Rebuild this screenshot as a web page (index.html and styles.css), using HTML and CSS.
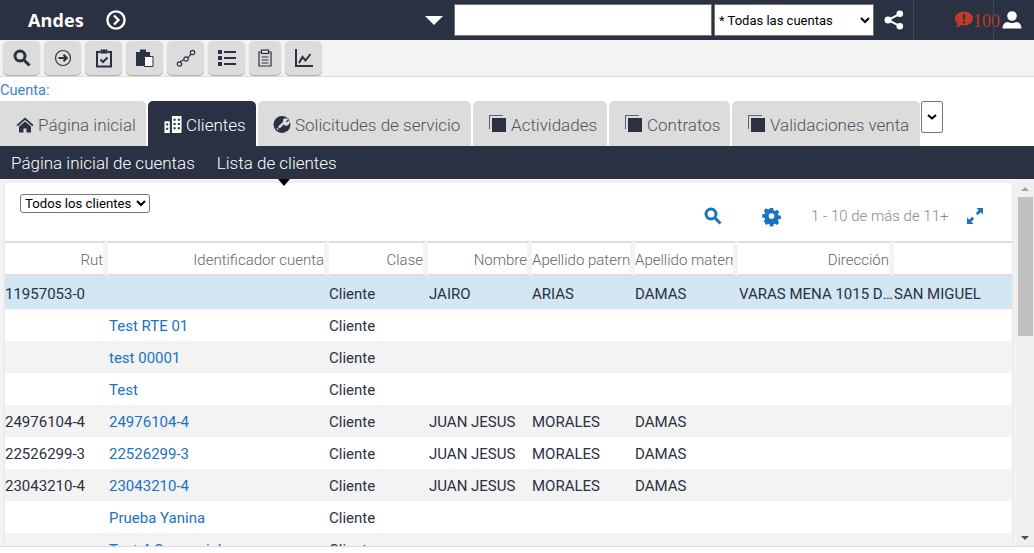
FILE: index.html
```html
<!DOCTYPE html>
<html>
<head>
    <meta charset="utf-8" />
    <title>Andes - Lista de clientes</title>
    <link rel="stylesheet" href="styles.css">
</head>
<body>
<header class="topbar">
    <span class="logo">Ande<span class="logo-dot">s</span></span>
    <svg class="go" viewBox="0 0 20 20"><circle cx="10" cy="10" r="8.600"/><path d="M8 5.500l4.500 4.500L8 14.500"/></svg>
    <span class="caret"></span>
    <input class="search" type="text">
    <select class="accounts"><option>* Todas las cuentas</option></select>
    <svg class="share" viewBox="0 0 20 20"><path d="M15.800 3.800L4 10l11.800 6.200"/><circle cx="15.800" cy="3.800" r="3.300"/><circle cx="4" cy="10" r="3.500"/><circle cx="15.800" cy="16.200" r="3.300"/></svg>
    <div class="alerts">
        <svg class="bubble" viewBox="0 0 18 18"><path d="M9 0.500c5 0 9 3 9 7s-4 7-9 7c-1 0-2-.1-2.900-.4C4.800 15.400 3 16.500.8 16.500c1.100-1.100 1.800-2.300 2-3.700C1.100 11.500 0 9.600 0 7.500c0-4 4-7 9-7z"/><path class="mark" d="M8 3h2.200l-.3 6H8.300zM8 10.200h2.200v2H8z"/></svg>
        <span class="count">100</span>
        <svg class="user" viewBox="0 0 20 18"><circle cx="10" cy="5" r="4.800"/><path d="M0.500 17.500c0-4.500 3-6.500 5.500-6.500 1 .6 2.500 1 4 1s3-.4 4-1c2.500 0 5.500 2 5.500 6.500z"/></svg>
    </div>
</header>

<nav class="tools">
    <button class="tool"><svg viewBox="0 0 18 18"><circle cx="7" cy="7" r="5" class="thick"/><path d="M11 11l5.500 5.500" class="thick"/></svg></button>
    <button class="tool"><svg viewBox="0 0 18 18"><circle cx="9" cy="9" r="7.500"/><path d="M4.500 9h8M9.500 5.800L12.800 9l-3.300 3.200" class="mid"/></svg></button>
    <button class="tool"><svg viewBox="0 0 18 18"><path d="M5.500 3H2v14.500h14V3h-3.500" class="mid"/><rect x="5.500" y="0.500" width="7" height="4" class="fill"/><path d="M5.500 10.500l2.500 2.500 4.500-4.500" class="mid"/></svg></button>
    <button class="tool"><svg viewBox="0 0 18 18"><path class="fill" d="M0 3h4V0.500h6V3h4v4H8v10H0z"/><path d="M8.500 7.500h8.500v10H8.500z" class="paper"/></svg></button>
    <button class="tool"><svg viewBox="0 0 18 18"><circle cx="2.500" cy="15" r="2.200"/><circle cx="9" cy="10" r="2.200"/><circle cx="15.500" cy="3.500" r="2.200"/><path d="M2.800 12.800L7 10.800M11 9l3-3.800"/></svg></button>
    <button class="tool"><svg viewBox="0 0 18 18"><path class="fill" d="M0 1h4v4H0zM0 7h4v4H0zM0 13h4v4H0z"/><path d="M6 3h12M6 9h12M6 15h12" class="mid"/></svg></button>
    <button class="tool tool-narrow"><svg viewBox="0 0 18 18"><path d="M5 3H3v14h12V3h-2"/><rect x="5.500" y="1" width="7" height="3.500"/><path d="M5.500 8h7M5.500 11h7M5.500 14h7"/></svg></button>
    <button class="tool"><svg viewBox="0 0 18 18"><path d="M1 0v17h17" class="mid"/><path d="M4 14l3.500-6 3 3.500L15.500 5" class="mid"/></svg></button>
</nav>

<div class="crumb">Cuenta:</div>

<div class="tabs">
    <a class="tab">
        <svg class="tab-icon" viewBox="0 0 18 16"><path d="M9 1L0.500 8.500l1.200 1.200L9 3.400l7.300 6.300 1.200-1.200z"/><path d="M3 10l6-5 6 5v6h-4.500v-4h-3v4H3z"/></svg>
        Página inicial</a>
    <a class="tab tab-on">
        <svg class="tab-icon" viewBox="0 0 16 16"><path d="M0 5h5v11H0zM7 0h9v16H7z"/><path class="holes" d="M1.500 7h2v2h-2zM1.500 11h2v2h-2zM8.500 2.500h2v2h-2zM12.500 2.500h2v2h-2zM8.500 6.500h2v2h-2zM12.500 6.500h2v2h-2zM8.500 10.500h2v2h-2zM12.500 10.500h2v2h-2z"/></svg>
        Clientes</a>
    <a class="tab">
        <svg class="tab-icon" viewBox="0 0 16 16"><circle cx="8" cy="8" r="8"/><path class="wrench" d="M11 5L5 11"/><path class="wrench-end" d="M9.500 3.500a3 3 0 0 1 3.600-.4l-1.600 1.600.3 1.300 1.300.3 1.600-1.600a3 3 0 0 1-4.200 3.600zM3 11.500l1.500 1.500"/></svg>
        Solicitudes de servicio</a>
    <a class="tab"><span class="stack"></span>Actividades</a>
    <a class="tab"><span class="stack"></span>Contratos</a>
    <a class="tab"><span class="stack"></span>Validaciones venta</a>
    <button class="more"><svg viewBox="0 0 10 6"><path d="M1 1l4 3.500L9 1"/></svg></button>
</div>

<div class="subnav">
    <a>Página inicial de cuentas</a>
    <a class="sub-on">Lista de clientes</a>
</div>

<div class="main">
    <section class="panel">
        <div class="list-head">
            <select class="views"><option>Todos los clientes</option></select>
            <div class="list-tools">
                <svg class="act act-search" viewBox="0 0 18 18"><circle cx="7" cy="7" r="5"/><path d="M11 11l5.500 5.500"/></svg>
                <svg class="act act-gear" viewBox="0 0 18 18"><path d="M7.300 0h3.400l.4 2.500 1.500.7L14.800 1.800l2.400 2.400-1.400 2.100.6 1.500 2.500.4v3.400l-2.500.4-.6 1.500 1.400 2.100-2.400 2.400-2.100-1.400-1.500.6-.4 2.500H7.300l-.4-2.500-1.500-.6-2.100 1.400L.9 14.100l1.400-2.100-.6-1.500L-.800 10.100V6.700l2.500-.4.600-1.500-1.400-2.100 2.400-2.400 2.100 1.400 1.500-.7z"/><circle class="gear-hole" cx="9" cy="8.500" r="3"/></svg>
                <span class="pager">1 - 10 de más de 11+</span>
                <svg class="act act-expand" viewBox="0 0 16 16"><path d="M9.500 0H16v6.500L13.700 4.300 10.800 7.200 8.800 5.200 11.700 2.300zM0 9.500L2.300 11.700 5.200 8.800 7.200 10.800 4.300 13.700 6.500 16H0z"/></svg>
            </div>
        </div>
        <table class="grid">
            <colgroup>
                <col class="c-rut"><col class="c-id"><col class="c-clase"><col class="c-nombre"><col class="c-ap"><col class="c-ap"><col class="c-dir"><col class="c-last">
            </colgroup>
            <thead>
                <tr><th>Rut</th><th>Identificador cuenta</th><th>Clase</th><th>Nombre</th><th class="clip">Apellido paterno</th><th class="clip">Apellido materno</th><th>Dirección</th><th></th></tr>
            </thead>
            <tbody>
                <tr class="sel"><td>11957053-0</td><td></td><td>Cliente</td><td>JAIRO</td><td>ARIAS</td><td>DAMAS</td><td class="dots">VARAS MENA 1015 DEPTO 2</td><td>SAN MIGUEL</td></tr>
                <tr><td></td><td><a>Test RTE 01</a></td><td>Cliente</td><td></td><td></td><td></td><td></td><td></td></tr>
                <tr><td></td><td><a>test 00001</a></td><td>Cliente</td><td></td><td></td><td></td><td></td><td></td></tr>
                <tr><td></td><td><a>Test</a></td><td>Cliente</td><td></td><td></td><td></td><td></td><td></td></tr>
                <tr><td>24976104-4</td><td><a>24976104-4</a></td><td>Cliente</td><td>JUAN JESUS</td><td>MORALES</td><td>DAMAS</td><td></td><td></td></tr>
                <tr><td>22526299-3</td><td><a>22526299-3</a></td><td>Cliente</td><td>JUAN JESUS</td><td>MORALES</td><td>DAMAS</td><td></td><td></td></tr>
                <tr><td>23043210-4</td><td><a>23043210-4</a></td><td>Cliente</td><td>JUAN JESUS</td><td>MORALES</td><td>DAMAS</td><td></td><td></td></tr>
                <tr><td></td><td><a>Prueba Yanina</a></td><td>Cliente</td><td></td><td></td><td></td><td></td><td></td></tr>
                <tr><td></td><td><a>Test 4 Comercial</a></td><td>Cliente</td><td></td><td></td><td></td><td></td><td></td></tr>
            </tbody>
        </table>
    </section>
    <div class="scrollbar">
        <span class="arrow-up"></span>
        <span class="thumb"></span>
        <span class="arrow-down"></span>
    </div>
</div>
</body>
</html>
```
FILE: styles.css
```css
html, body {
    margin: 0;
    height: 553px;
    overflow: hidden;
    background: #fff;
}
body {
    font-family: Roboto, "Liberation Sans", sans-serif;
    font-size: 15px;
    color: #2a3142;
}
a {
    color: inherit;
    text-decoration: none;
}

/* top bar */
.topbar {
    height: 40px;
    background: #2a3142;
    display: flex;
    align-items: center;
}
.logo {
    margin-left: 28px;
    width: 56px;
    color: #fff;
    font-family: "Open Sans", sans-serif;
    font-size: 18px;
    font-weight: 700;
    letter-spacing: .1px;
}
.logo-dot {
    position: relative;
}
.logo-dot::before {
    content: "";
    position: absolute;
    left: 0;
    bottom: 5px;
    width: 2px;
    height: 2px;
    background: #d8232a;
}
.go {
    width: 20px;
    height: 20px;
    margin-left: 22px;
    fill: none;
    stroke: #fff;
    stroke-width: 2.400;
}
.caret {
    margin-left: 299px;
    border-left: 9px solid transparent;
    border-right: 9px solid transparent;
    border-top: 9px solid #fff;
}
.search {
    margin-left: 11px;
    width: 258px;
    height: 32px;
    box-sizing: border-box;
    border: 1px solid #767676;
    background: #fff;
    padding: 0;
}
.accounts {
    margin-left: 2px;
    width: 160px;
    height: 32px;
    border: 1px solid #767676;
    background: #fff;
    font-family: Roboto, sans-serif;
    font-size: 13px;
    padding-left: 0;
}
.share {
    width: 20px;
    height: 20px;
    margin-left: 10px;
    fill: #fff;
}
.share path {
    fill: none;
    stroke: #fff;
    stroke-width: 2;
}
.alerts {
    margin-left: 9px;
    width: 120px;
    height: 40px;
    box-sizing: border-box;
    border-left: 1px solid #3f4656;
    display: flex;
    align-items: center;
    padding-left: 41px;
    position: relative;
}
.alerts::after {
    content: "";
    position: absolute;
    left: 79px;
    top: 0;
    bottom: 0;
    border-left: 1px solid #3f4656;
}
.bubble {
    width: 18px;
    height: 18px;
    fill: #c0392b;
}
.bubble .mark {
    fill: #2a3142;
}
.count {
    color: #c0392b;
    font-family: "Liberation Serif", serif;
    font-size: 18px;
    margin-top: 3px;
}
.user {
    width: 20px;
    height: 18px;
    margin-left: 2px;
    fill: #fff;
}

/* toolbar */
.tools {
    height: 37px;
    box-sizing: border-box;
    background: #f3f3f3;
    border-bottom: 1px solid #ddd;
    padding: 1px 0 0 3px;
    display: flex;
    gap: 4px;
}
.tool {
    width: 37px;
    height: 34px;
    padding: 0;
    border: 0;
    border-radius: 5px;
    background: #dcdcdc;
    box-shadow: 0 1px 1px #aaa;
    display: flex;
    align-items: center;
    justify-content: center;
}
.tool-narrow {
    width: 32px;
}
.tool svg {
    width: 18px;
    height: 18px;
    fill: none;
    stroke: #2a3142;
    stroke-width: 1.200;
    overflow: visible;
}
.tool .thick {
    stroke-width: 3;
}
.tool .mid {
    stroke-width: 2;
}
.tool .fill {
    fill: #2a3142;
    stroke: none;
}
.tool .paper {
    fill: #fff;
    stroke: #2a3142;
    stroke-width: 1;
}

.crumb {
    height: 24px;
    line-height: 26px;
    font-size: 14.600px;
    color: #3b86c8;
}

/* tabs */
.tabs {
    height: 45px;
    display: flex;
    align-items: flex-start;
    gap: 2px;
}
.tab {
    height: 45px;
    box-sizing: border-box;
    background: #dcdcdc;
    border-radius: 5px 5px 0 0;
    display: flex;
    align-items: center;
    font-size: 17px;
    font-weight: 300;
    color: #4d5463;
    padding: 3px 0 0 16px;
    white-space: nowrap;
}
.tab:nth-child(1) { width: 146px; border-top-left-radius: 0; }
.tab:nth-child(2) { width: 108px; }
.tab:nth-child(3) { width: 213px; padding-left: 15px; }
.tab:nth-child(4) { width: 134px; }
.tab:nth-child(5) { width: 121px; }
.tab:nth-child(6) { width: 188px; }
.tab-on {
    background: #2a3142;
    color: #fff;
}
.tab-icon {
    width: 18px;
    height: 17px;
    margin-right: 4px;
    margin-top: -2px;
    fill: #2a3142;
}
.tab-on .tab-icon {
    fill: #fff;
}
.tab-on .holes {
    fill: #2a3142;
}
.wrench {
    fill: none;
    stroke: #dcdcdc;
    stroke-width: 2.200;
}
.wrench-end {
    fill: #dcdcdc;
    stroke: #dcdcdc;
    stroke-width: 1;
}
.stack {
    width: 14px;
    height: 14px;
    margin: -1px 5px 0 3px;
    background: #2a3142;
    box-shadow: -2px -2px 0 0 #dcdcdc, -3px -3px 0 0 #5d6472;
}
.more {
    margin-left: -1px;
    width: 22px;
    height: 32px;
    padding: 0;
    background: #fff;
    border: 1px solid #767676;
    border-radius: 2px;
    display: flex;
    align-items: center;
    justify-content: center;
}
.more svg {
    width: 10px;
    height: 6px;
    fill: none;
    stroke: #000;
    stroke-width: 2;
}

/* second level menu */
.subnav {
    height: 33px;
    background: #2a3142;
    color: #fff;
    font-size: 17px;
    font-weight: 300;
    display: flex;
    align-items: center;
    gap: 22px;
    padding-left: 11px;
}
.sub-on {
    position: relative;
    align-self: stretch;
    line-height: 35px;
}
.sub-on::after {
    content: "";
    position: absolute;
    left: 61px;
    top: 33px;
    border-left: 6px solid transparent;
    border-right: 6px solid transparent;
    border-top: 7px solid #000;
}

/* client list */
.main {
    height: 368px;
    box-sizing: border-box;
    background: #f3f3f3;
    border-bottom: 1px solid #ddd;
    display: flex;
    overflow: hidden;
}
.panel {
    margin: 4px 0 0 5px;
    width: 1007px;
    background: #fff;
    box-shadow: 0 0 3px rgba(0,0,0,.1);
    flex: none;
}
.list-head {
    height: 58px;
    box-sizing: border-box;
    padding: 11px 29px 0 15px;
    display: flex;
    justify-content: space-between;
}
.views {
    width: 130px;
    height: 19px;
    border: 1px solid #767676;
    border-radius: 3px;
    background: #fff;
    font-family: Roboto, sans-serif;
    font-size: 13.200px;
    padding: 0;
}
.list-tools {
    display: flex;
    align-items: center;
    height: 44px;
    color: #888;
}
.act {
    flex: none;
    fill: #1a73c0;
}
.act-search {
    width: 18px;
    height: 18px;
    fill: none;
    stroke: #1a73c0;
    stroke-width: 3;
}
.act-gear {
    width: 17px;
    height: 17px;
    margin-left: 41px;
    overflow: visible;
}
.gear-hole {
    fill: #fff;
}
.pager {
    margin-left: 31px;
    width: 156px;
    font-size: 15px;
    font-weight: 300;
}
.act-expand {
    width: 16px;
    height: 16px;
}
.grid {
    width: 1007px;
    table-layout: fixed;
    border-collapse: separate;
    border-spacing: 0;
}
.c-rut { width: 103px; }
.c-id { width: 221px; }
.c-clase { width: 99px; }
.c-nombre { width: 104px; }
.c-ap { width: 103px; }
.c-dir { width: 156px; }
.c-last { width: 118px; }
.grid th {
    height: 29px;
    padding: 2px 0 0 0;
    font-weight: 300;
    font-size: 15px;
    text-align: right;
    color: #666;
    border-top: 2px solid #ddd;
    border-bottom: 2px solid #ddd;
    border-right: 5px solid #f3f3f3;
    white-space: nowrap;
    overflow: hidden;
}
.grid th:last-child {
    border-right: 0;
}
.grid th.clip {
    text-align: left;
    text-overflow: clip;
}
.grid td {
    height: 30px;
    padding: 2px 0 0 0;
    white-space: nowrap;
    overflow: hidden;
    color: #2a3142;
}
.grid td:nth-child(2),
.grid td:nth-child(4),
.grid td:nth-child(7) {
    padding-left: 1px;
}
.grid td a {
    color: #1a73c0;
}
.grid tbody tr:nth-child(odd) td {
    background: #f3f3f3;
}
.grid tbody tr:nth-child(even) td {
    background: #fff;
}
.grid tbody tr.sel td {
    background: #d2e6f4;
    height: 31px;
}
.dots {
    text-overflow: ellipsis;
}

/* scrollbar */
.scrollbar {
    margin-left: 4px;
    width: 18px;
    background: #f0f0f0;
    display: flex;
    flex-direction: column;
    align-items: center;
    padding-top: 8px;
}
.arrow-up {
    border-left: 4px solid transparent;
    border-right: 4px solid transparent;
    border-bottom: 4px solid #a3a3a3;
}
.thumb {
    margin-top: 6px;
    width: 15px;
    height: 139px;
    background: #c1c1c1;
}
.arrow-down {
    margin-top: auto;
    margin-bottom: 6px;
    border-left: 4px solid transparent;
    border-right: 4px solid transparent;
    border-top: 4px solid #505050;
}
```
